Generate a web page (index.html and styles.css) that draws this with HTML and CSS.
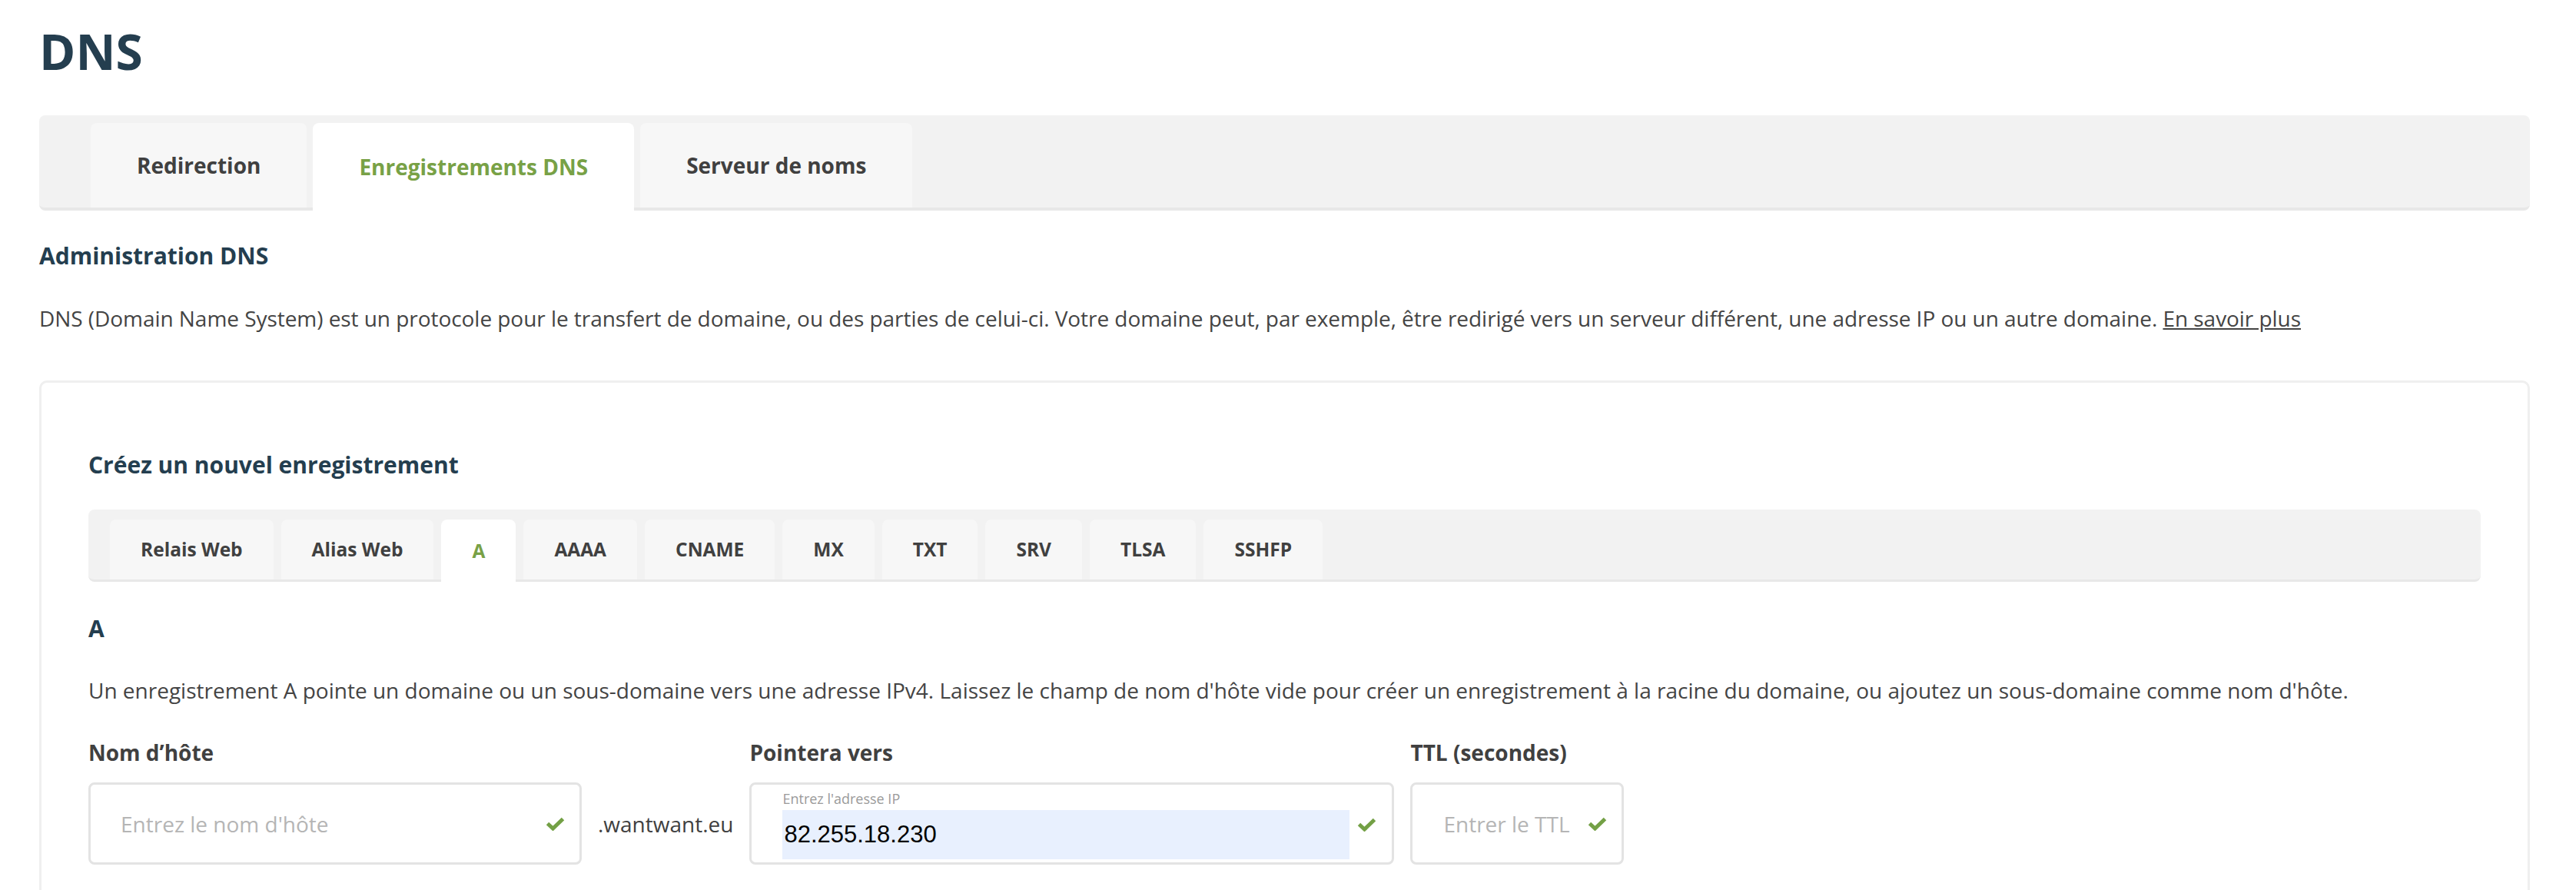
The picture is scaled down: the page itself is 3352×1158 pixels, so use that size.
FILE: index.html
```html
<!DOCTYPE html>
<html lang="fr">
<head>
<meta charset="utf-8">
<title>DNS</title>
<link rel="stylesheet" href="styles.css">
</head>
<body>
<main class="page">
  <h1 class="page-title">DNS</h1>

  <nav class="tabs">
    <a class="tab" href="#">Redirection</a>
    <a class="tab tab--active" href="#">Enregistrements DNS</a>
    <a class="tab" href="#">Serveur de noms</a>
  </nav>

  <h2 class="section-title">Administration DNS</h2>
  <p class="intro">DNS (Domain Name System) est un protocole pour le transfert de domaine, ou des parties de celui-ci. Votre domaine peut, par exemple, être redirigé vers un serveur différent, une adresse IP ou un autre domaine. <a class="more" href="#">En savoir plus</a></p>

  <section class="card">
    <h2 class="card-title">Créez un nouvel enregistrement</h2>

    <nav class="subtabs">
      <a class="subtab" href="#">Relais Web</a>
      <a class="subtab" href="#">Alias Web</a>
      <a class="subtab subtab--active" href="#">A</a>
      <a class="subtab" href="#">AAAA</a>
      <a class="subtab" href="#">CNAME</a>
      <a class="subtab" href="#">MX</a>
      <a class="subtab" href="#">TXT</a>
      <a class="subtab" href="#">SRV</a>
      <a class="subtab" href="#">TLSA</a>
      <a class="subtab" href="#">SSHFP</a>
    </nav>

    <h3 class="record-title">A</h3>
    <p class="record-desc">Un enregistrement A pointe un domaine ou un sous-domaine vers une adresse IPv4. Laissez le champ de nom d'hôte vide pour créer un enregistrement à la racine du domaine, ou ajoutez un sous-domaine comme nom d'hôte.</p>

    <form class="record-form">
      <label class="field-label" for="host">Nom d’hôte</label>
      <span class="spacer"></span>
      <label class="field-label" for="ip">Pointera vers</label>
      <label class="field-label" for="ttl">TTL (secondes)</label>

      <div class="field field--host">
        <input class="field-input" id="host" type="text" placeholder="Entrez le nom d'hôte">
        <svg class="check" viewBox="0 0 25 18" aria-hidden="true"><polyline points="2.5,8.5 9.5,15 22.5,2.5"/></svg>
      </div>
      <span class="suffix">.wantwant.eu</span>
      <div class="field field--floating">
        <div class="field-stack">
          <span class="float-label">Entrez l'adresse IP</span>
          <input class="field-input field-input--filled" id="ip" type="text" value="82.255.18.230">
        </div>
        <svg class="check" viewBox="0 0 25 18" aria-hidden="true"><polyline points="2.5,8.5 9.5,15 22.5,2.5"/></svg>
      </div>
      <div class="field field--ttl">
        <input class="field-input" id="ttl" type="text" placeholder="Entrer le TTL">
        <svg class="check" viewBox="0 0 25 18" aria-hidden="true"><polyline points="2.5,8.5 9.5,15 22.5,2.5"/></svg>
      </div>
    </form>
  </section>
</main>
</body>
</html>
```

FILE: styles.css
```css
* { box-sizing: border-box; }

html, body {
  margin: 0;
  background: #fff;
}

body {
  font-family: "Open Sans", "Liberation Sans", sans-serif;
  color: #444;
  font-size: 28px;
  line-height: 42px;
}

.page {
  padding: 28px 60px 0 51px;
}

.page-title {
  margin: 0;
  font-size: 64px;
  line-height: 77px;
  font-weight: 700;
  color: #243e4f;
}

/* top tabs */
.tabs {
  margin-top: 45px;
  display: flex;
  align-items: flex-start;
  gap: 8px;
  padding: 10px 0 0 67px;
  background: #f2f2f2;
  border-bottom: 4px solid #e8e8e8;
  border-radius: 8px;
}

.tab {
  height: 110px;
  padding: 0 60px;
  display: flex;
  align-items: center;
  background: #f7f7f7;
  border-radius: 8px 8px 0 0;
  font-size: 28px;
  font-weight: 700;
  color: #404040;
  text-decoration: none;
}

.tab--active {
  background: #fff;
  color: #78a146;
  height: 114px;
  margin-bottom: -4px;
}

.section-title {
  margin: 38px 0 0;
  font-size: 30px;
  line-height: 42px;
  font-weight: 700;
  color: #243e4f;
}

.intro {
  margin: 39px 0 0;
  letter-spacing: -0.05px;
}

.more {
  color: inherit;
  text-decoration: underline;
}

/* card */
.card {
  margin-top: 60px;
  border: 3px solid #efefef;
  border-radius: 10px;
  padding: 86px 61px 80px;
}

.card-title {
  margin: 0;
  font-size: 30px;
  line-height: 42px;
  font-weight: 700;
  color: #243e4f;
}

.subtabs {
  margin-top: 37px;
  display: flex;
  align-items: flex-start;
  gap: 10px;
  padding: 13px 0 0 28px;
  background: #f2f2f2;
  border-bottom: 3px solid #e8e8e8;
  border-radius: 8px;
}

.subtab {
  height: 78px;
  padding: 0 40px;
  display: flex;
  align-items: center;
  background: #f7f7f7;
  border-radius: 8px 8px 0 0;
  font-size: 24.5px;
  font-weight: 700;
  color: #404040;
  text-decoration: none;
}

.subtab--active {
  background: #fff;
  color: #78a146;
  height: 81px;
  margin-bottom: -3px;
}

.record-title {
  margin: 40px 0 0;
  font-size: 30px;
  line-height: 42px;
  font-weight: 700;
  color: #243e4f;
}

.record-desc {
  margin: 38px 0 0;
}

/* form */
.record-form {
  margin-top: 39px;
  display: grid;
  grid-template-columns: 642px auto 839px 278px;
  justify-content: start;
  column-gap: 21px;
  row-gap: 18px;
  align-items: center;
}

.field-label {
  font-weight: 700;
  color: #404040;
}

.suffix {
  color: #404040;
}

.field {
  height: 107px;
  border: 3px solid #e3e3e3;
  border-radius: 8px;
  display: flex;
  align-items: center;
  gap: 10px;
}

.field--host {
  padding: 0 19px 0 39px;
}

.field--ttl {
  padding: 0 19px 0 40px;
}

.field--floating {
  padding: 7px 20px 4px 40px;
  align-items: stretch;
}

.field-stack {
  flex: 1;
  min-width: 0;
  display: flex;
  flex-direction: column;
}

.float-label {
  font-size: 18px;
  line-height: 22px;
  color: #9a9a9a;
}

.field-input {
  flex: 1;
  min-width: 0;
  width: 0;
  border: 0;
  outline: 0;
  padding: 0;
  margin: 0;
  background: transparent;
  font-family: "Open Sans", "Liberation Sans", sans-serif;
  font-size: 28px;
  color: #444;
}

.field-input::placeholder {
  color: #b5b5b5;
  opacity: 1;
}

.field-input--filled {
  flex: none;
  width: 100%;
  height: 64px;
  margin-top: 4px;
  padding: 0 2px;
  background: #e8f0fe;
  font-family: "Liberation Sans", Arial, sans-serif;
  font-size: 31px;
  color: #000;
}

.check {
  flex: none;
  width: 25px;
  height: 18px;
  align-self: center;
  fill: none;
  stroke: #73a045;
  stroke-width: 5;
}
```
